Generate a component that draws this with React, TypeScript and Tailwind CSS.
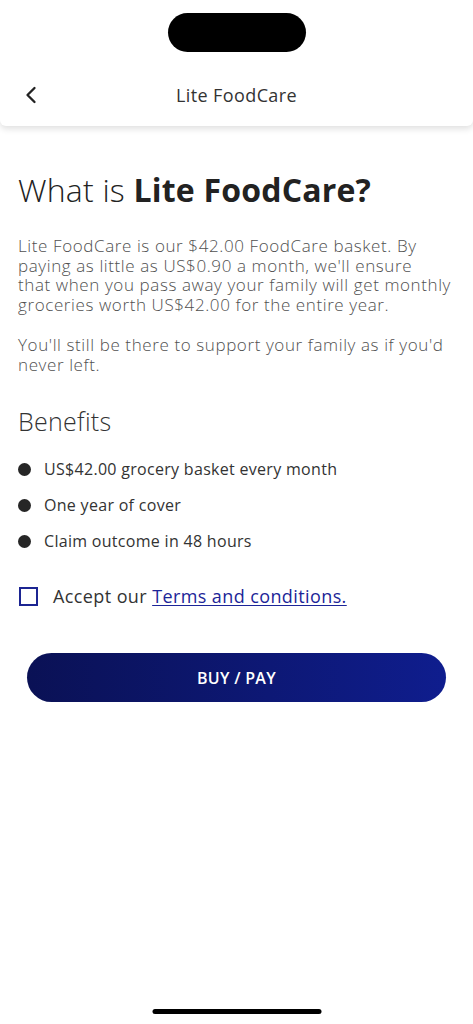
import { ChevronLeft } from "lucide-react";

const benefits = [
  "US$42.00 grocery basket every month",
  "One year of cover",
  "Claim outcome in 48 hours",
];

const intro = [
  "Lite FoodCare is our $42.00 FoodCare basket. By",
  "paying as little as US$0.90 a month, we'll ensure",
  "that when you pass away your family will get monthly",
  "groceries worth US$42.00 for the entire year.",
];

const outro = ["You'll still be there to support your family as if you'd", "never left."];

export default function App() {
  return (
    <div
      className="relative flex h-[1024px] w-full flex-col bg-white text-[#2b2b2b]"
      style={{ fontFamily: '"Open Sans", "Noto Sans", sans-serif' }}
    >
      {/* Header */}
      <header className="rounded-b-[6px] bg-white shadow-[0_3px_6px_rgba(0,0,0,0.12)]">
        <div className="flex justify-center pt-[13px]">
          <div className="h-[39px] w-[138px] rounded-full bg-black" />
        </div>
        <div className="relative flex h-[74px] items-center justify-center pt-[12px]">
          <button className="absolute left-[17px] top-[29px] text-[#222]">
            <ChevronLeft size={28} strokeWidth={2} />
          </button>
          <span className="text-[18px] font-normal tracking-[0.4px] text-[#333]">Lite FoodCare</span>
        </div>
      </header>

      <main className="flex flex-col px-[18px]">
        <h1 className="mt-[44px] whitespace-nowrap text-[32px] font-light leading-[40px] tracking-[0.2px] text-[#222]">
          What is <span className="font-bold">Lite FoodCare?</span>
        </h1>

        <p className="mt-[26px] text-[17px] font-light leading-[19.7px] tracking-[0.6px] text-[#505050]">
          {intro.map((l) => (
            <span key={l} className="block whitespace-nowrap">
              {l}
            </span>
          ))}
        </p>
        <p className="mt-[20px] text-[17px] font-light leading-[19.7px] tracking-[0.6px] text-[#505050]">
          {outro.map((l) => (
            <span key={l} className="block whitespace-nowrap">
              {l}
            </span>
          ))}
        </p>

        <h2 className="mt-[32px] text-[25px] font-light leading-[30px] tracking-[0.3px] text-[#333]">
          Benefits
        </h2>

        <ul className="mt-[23px] flex flex-col gap-[16px]">
          {benefits.map((b) => (
            <li key={b} className="flex items-center gap-[13px]">
              <span className="h-[13px] w-[13px] shrink-0 rounded-full bg-[#262626]" />
              <span className="text-[16px] leading-[20px] tracking-[0.3px] text-[#333]">{b}</span>
            </li>
          ))}
        </ul>

        <label className="mt-[33px] flex items-center gap-[15px] pl-[1px]">
          <span className="h-[19px] w-[19px] shrink-0 border-2 border-[#1c2592]" />
          <span className="text-[18px] leading-[24px] tracking-[0.4px] text-[#333]">
            Accept our{" "}
            <a href="#" className="text-[#1c2598] underline underline-offset-2">
              Terms and conditions.
            </a>
          </span>
        </label>

        <button className="mx-[9px] mt-[45px] h-[49px] rounded-full bg-gradient-to-r from-[#0a1155] to-[#0f1d8e] text-[16px] font-semibold tracking-[0.3px] text-white">
          BUY / PAY
        </button>
      </main>

      <div className="absolute bottom-[10px] left-1/2 h-[5px] w-[169px] -translate-x-1/2 rounded-full bg-black" />
    </div>
  );
}
